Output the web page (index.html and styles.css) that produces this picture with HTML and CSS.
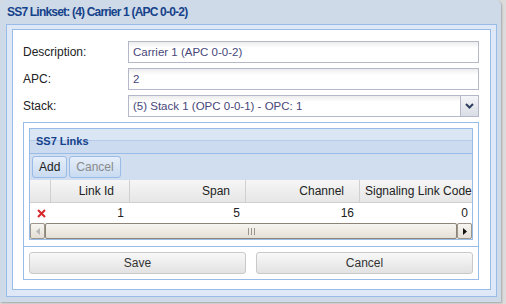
FILE: index.html
```html
<!DOCTYPE html>
<html lang="en">
<head>
  <meta charset="UTF-8">
  <title>SS7 Linkset</title>
  <link rel="stylesheet" href="styles.css">
</head>
<body>
  <div class="window">
    <div class="window-title">SS7 Linkset: (4) Carrier 1 (APC 0-0-2)</div>
    <div class="window-body">
      <div class="form-panel">
        <div class="form-row">
          <label>Description:</label>
          <div class="field">Carrier 1 (APC 0-0-2)</div>
        </div>
        <div class="form-row">
          <label>APC:</label>
          <div class="field">2</div>
        </div>
        <div class="form-row">
          <label>Stack:</label>
          <div class="combo">
            <div class="field">(5) Stack 1 (OPC 0-0-1) - OPC: 1</div>
            <div class="trigger">
              <svg width="9" height="6" viewBox="0 0 9 6"><path d="M1 1 L4.5 4.5 L8 1" fill="none" stroke="#2f3f60" stroke-width="2"/></svg>
            </div>
          </div>
        </div>

        <div class="links-box">
          <div class="links-body">
            <div class="grid-panel">
              <div class="grid-title">SS7 Links</div>
              <div class="grid-tbar">
                <button class="tbtn">Add</button>
                <button class="tbtn disabled">Cancel</button>
              </div>
              <div class="grid-view">
                <div class="grid-head">
                  <div class="hcell"></div>
                  <div class="hcell">Link Id</div>
                  <div class="hcell">Span</div>
                  <div class="hcell">Channel</div>
                  <div class="hcell">Signaling Link Code</div>
                </div>
                <div class="grid-row">
                  <div class="cell del">
                    <svg width="9" height="9" viewBox="0 0 9 9"><path d="M1 1 L8 8 M8 1 L1 8" stroke="#d8262b" stroke-width="2"/></svg>
                  </div>
                  <div class="cell">1</div>
                  <div class="cell">5</div>
                  <div class="cell">16</div>
                  <div class="cell">0</div>
                </div>
              </div>
              <div class="hscroll">
                <div class="sb-btn">
                  <svg width="4" height="7" viewBox="0 0 4 7"><path d="M4 0 L0 3.5 L4 7 Z" fill="#b8b8b8"/></svg>
                </div>
                <div class="sb-thumb"><span></span><span></span><span></span></div>
                <div class="sb-btn">
                  <svg width="4" height="7" viewBox="0 0 4 7"><path d="M0 0 L4 3.5 L0 7 Z" fill="#111"/></svg>
                </div>
              </div>
            </div>
          </div>
          <div class="links-footer">
            <button class="fbtn">Save</button>
            <button class="fbtn">Cancel</button>
          </div>
        </div>
      </div>
    </div>
  </div>
</body>
</html>
```

FILE: styles.css
```css
* {
  box-sizing: border-box;
}
body {
  margin: 0;
  width: 506px;
  height: 304px;
  overflow: hidden;
  background: #dcdcdc;
  font-family: "Liberation Sans", Arial, sans-serif;
  font-size: 12px;
  color: #222;
}
.window {
  width: 501px;
  height: 302px;
  padding: 0 4px 5px 6px;
  background: #cedae7;
  border-radius: 4px 5px 0 0;
  box-shadow: 1px 1px 2px rgba(0, 0, 0, 0.25);
  display: flex;
  flex-direction: column;
}
.window-title {
  height: 24px;
  line-height: 24px;
  padding-left: 1px;
  font-size: 12px;
  font-weight: bold;
  letter-spacing: -0.8px;
  color: #15428b;
}
.window-body {
  flex: 1;
  border: 1px solid #99bbe8;
  background: #dfe8f6;
  padding: 4px 5px 6px;
}
.form-panel {
  height: 100%;
  border: 1px solid #99bbe8;
  background: #fff;
  padding: 11px 11px 0 10px;
}
.form-row {
  display: flex;
  align-items: center;
  height: 22px;
  margin-bottom: 5px;
}
.form-row label {
  width: 105px;
}
.field {
  flex: 1;
  height: 22px;
  border: 1px solid #b5b8c8;
  background: linear-gradient(#ececec, #fff 6px);
  padding: 0 4px;
  line-height: 20px;
  font-size: 11.5px;
  color: #47477a;
  white-space: nowrap;
  overflow: hidden;
}
.combo {
  flex: 1;
  display: flex;
}
.trigger {
  width: 18px;
  height: 22px;
  border: 1px solid #b5b8c8;
  border-left: 0;
  background: linear-gradient(#f4f5f8, #d9dde5);
  display: flex;
  align-items: center;
  justify-content: center;
}

.links-box {
  height: 158px;
  border: 1px solid #99bbe8;
}
.links-body {
  padding: 5px 5px 6px;
  border-bottom: 1px solid #99bbe8;
}
.grid-panel {
  height: 112px;
  border: 1px solid #99bbe8;
  display: flex;
  flex-direction: column;
  overflow: hidden;
}
.grid-title {
  height: 25px;
  line-height: 24px;
  padding-left: 6px;
  border-bottom: 1px solid #99bbe8;
  background: linear-gradient(#dbe6f5 0, #dbe6f5 11px, #b5cbea 11px, #b5cbea 12px, #ccdbf0 12px, #ccdbf0 100%);
  font-size: 11px;
  font-weight: bold;
  color: #15428b;
}
.grid-tbar {
  height: 26px;
  padding: 2px;
  display: flex;
  gap: 2px;
  background: #d0def0;
}
.tbtn {
  height: 22px;
  padding: 0 6px;
  border: 1px solid #99bbe8;
  border-radius: 3px;
  background: linear-gradient(#e6eef9, #c9dbf1);
  font-family: inherit;
  font-size: 12px;
  color: #222;
}
.tbtn.disabled {
  color: #8a8a8a;
}
.grid-view {
  background: #fff;
  overflow: hidden;
}
.grid-head,
.grid-row {
  display: grid;
  grid-template-columns: 20px 80px 116px 114px 114px;
  width: 444px;
}
.grid-head {
  height: 23px;
  background: linear-gradient(#f6f6f6, #e6e6e6);
  border-bottom: 1px solid #d0d0d0;
}
.hcell {
  line-height: 22px;
  text-align: right;
  padding: 0 15px 0 5px;
  border-right: 1px solid #d0d0d0;
  white-space: nowrap;
  overflow: hidden;
}
.grid-row {
  height: 20px;
}
.cell {
  line-height: 20px;
  text-align: right;
  padding-right: 6px;
}
.cell.del {
  padding: 6px 0 0 7px;
  text-align: left;
}
.cell.del svg {
  display: block;
}

.hscroll {
  height: 16px;
  display: flex;
  background: #ece9e2;
}
.sb-btn {
  width: 15px;
  border: 1px solid #9c968a;
  border-radius: 2px;
  background: linear-gradient(#f8f6f2, #e4dfd6);
  display: flex;
  align-items: center;
  justify-content: center;
}
.sb-thumb {
  flex: 1;
  border: 1px solid #8c8577;
  border-radius: 2px;
  background: linear-gradient(#f7f5f0, #e5e0d6);
  display: flex;
  align-items: center;
  justify-content: center;
  gap: 2px;
}
.sb-thumb span {
  width: 1px;
  height: 7px;
  background: #9a968e;
}

.links-footer {
  padding: 5px;
  display: flex;
  gap: 10px;
}
.fbtn {
  flex: 1;
  height: 22px;
  border: 1px solid #c9c9c9;
  border-radius: 3px;
  background: linear-gradient(#f8f8f8, #e2e2e2);
  font-family: inherit;
  font-size: 12px;
  color: #333;
}
```
